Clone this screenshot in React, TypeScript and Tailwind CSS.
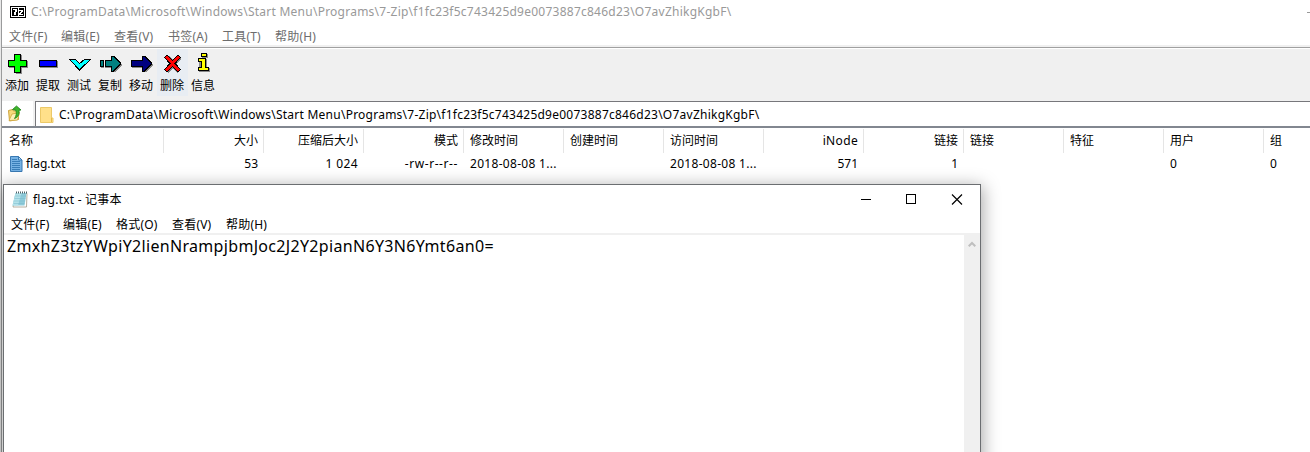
import type { ReactNode } from "react";

const PATH =
  "C:\\ProgramData\\Microsoft\\Windows\\Start Menu\\Programs\\7-Zip\\f1fc23f5c743425d9e0073887c846d23\\O7avZhikgKgbF\\";

function ToolIcon({ children }: { children: ReactNode }) {
  return (
    <svg width="31" height="24" viewBox="0 0 31 24" shapeRendering="crispEdges" className="block shrink-0">
      {children}
    </svg>
  );
}

const tools = [
  {
    label: "添加",
    icon: (
      <>
        <path d="M13 4h7v6h6v7h-6v6h-6v-1h-1z M7 11h19v6H7z" fill="#8a8a8a" />
        <path d="M12 3h7v6h6v7h-6v6h-7v-6H6V9h6z" fill="#000" />
        <path d="M13 4h5v6h6v5h-6v6h-5v-6H7v-5h6z" fill="#00ff00" />
      </>
    ),
  },
  {
    label: "提取",
    icon: (
      <>
        <path d="M7 10h18v7H7z" fill="#8a8a8a" />
        <path d="M6 9h18v7H6z" fill="#000" />
        <path d="M7 10h16v5H7z" fill="#0000ff" />
      </>
    ),
  },
  {
    label: "测试",
    icon: <path d="M5.500 8.500h6l4 4 5-4h6l-11 10.500z" fill="#00ffff" stroke="#000" />,
  },
  {
    label: "复制",
    icon: (
      <>
        <path d="M19 21l7-8 1 1-7 8z M6 16h3v1H6z M10 16h6v1h-6z" fill="#8a8a8a" />
        <path d="M5 9h4v7H5z M10 9h6V5h3l7 7v1l-7 8h-3v-5h-6z" fill="#000" />
        <path d="M6 10h2v5H6z M11 10h6V6h1l7 6.500-7 7.500h-1v-5h-6z" fill="#008080" />
      </>
    ),
  },
  {
    label: "移动",
    icon: (
      <>
        <path d="M19 21l7-8 1 1-7 8z M6 16h10v1H6z" fill="#8a8a8a" />
        <path d="M5 9h11V5h3l7 7v1l-7 8h-3v-5H5z" fill="#000" />
        <path d="M6 10h11V6h1l7 6.500-7 7.500h-1v-5H6z" fill="#000080" />
      </>
    ),
  },
  {
    label: "删除",
    icon: (
      <>
        <path d="M8 8l4-3 5 5 5-4 2 2-5 5 5 6-4 3-4-5-5 5-2-2 5-6z" fill="#8a8a8a" />
        <path
          d="M7.500 6.500l2.500-2.500 5.500 5.500 5.500-5.500 2.500 2.500-5.500 6 5.500 6-2.500 2.500-5.500-5.500-5.500 5.500-2.500-2.500 5.500-6z"
          fill="#ff0000"
          stroke="#000"
        />
      </>
    ),
  },
  {
    label: "信息",
    icon: (
      <>
        <path d="M14 3h6v4h-6z M11 8h8v9h3v4H11z" fill="#8a8a8a" />
        <path d="M13 2h6v4h-6z M11 7h7v9h3v4H10v-4h3v-5h-3V7z" fill="#000" />
        <path d="M14 3h4v2h-4z M11 8h6v9h3v2h-9v-2h3v-7h-3z" fill="#ffff00" />
      </>
    ),
  },
];

const mainMenu = [
  { label: "文件(F)", cls: "w-[52px]" },
  { label: "编辑(E)", cls: "w-[53px]" },
  { label: "查看(V)", cls: "w-[54px]" },
  { label: "书签(A)", cls: "w-[54px]" },
  { label: "工具(T)", cls: "w-[53px]" },
  { label: "帮助(H)", cls: "w-[53px]" },
];

const notepadMenu = [
  { label: "文件(F)", cls: "w-[52px]" },
  { label: "编辑(E)", cls: "w-[53px]" },
  { label: "格式(O)", cls: "w-[56px]" },
  { label: "查看(V)", cls: "w-[54px]" },
  { label: "帮助(H)", cls: "w-[54px]" },
];

const columns = [
  { title: "名称", value: "flag.txt", cls: "w-[162px] pl-[7px]", file: true },
  { title: "大小", value: "53", cls: "w-[100px] text-right pr-[6px]" },
  { title: "压缩后大小", value: "1 024", cls: "w-[100px] text-right pr-[6px]", track: "tracking-[0.4px]" },
  { title: "模式", value: "-rw-r--r--", cls: "w-[100px] text-right pr-[6px]", track: "tracking-[0.58px]" },
  { title: "修改时间", value: "2018-08-08 1...", cls: "w-[100px] pl-[6px]", track: "tracking-[0.3px]" },
  { title: "创建时间", value: "", cls: "w-[100px] pl-[6px]" },
  { title: "访问时间", value: "2018-08-08 1...", cls: "w-[100px] pl-[6px]", track: "tracking-[0.3px]" },
  { title: "iNode", value: "571", cls: "w-[100px] text-right pr-[6px]", titleTrack: "tracking-[0.35px]" },
  { title: "链接", value: "1", cls: "w-[100px] text-right pr-[6px]" },
  { title: "链接", value: "", cls: "w-[100px] pl-[6px]" },
  { title: "特征", value: "", cls: "w-[100px] pl-[6px]" },
  { title: "用户", value: "0", cls: "w-[100px] pl-[6px]" },
  { title: "组", value: "0", cls: "w-[100px] pl-[6px]" },
];

function SevenZipIcon() {
  return (
    <svg width="16" height="12" viewBox="0 0 16 12" shapeRendering="crispEdges" className="block">
      <path d="M0 0h16v12H0z" fill="#000" />
      <path d="M1 1h14v10H1z" fill="#fff" />
      <path d="M2 2h6v8H2z M9 2h5v8H9z" fill="#000" />
      <path d="M3 3h4v3H6v3H4V6h1V4H3z M9 4h4v2h-1v1h-1v1h2v1H9V7h1V6h1V5H9z" fill="#fff" />
    </svg>
  );
}

function UpFolderIcon() {
  return (
    <svg width="15" height="17" viewBox="0 0 15 17" className="block">
      <path d="M.5 5.500l4-1 1 1.500 5-.5v9l-9 1.500z" fill="#f6da7c" stroke="#c99b2e" strokeWidth=".9" />
      <path d="M1 15.500l3-6.500 7.500-1.500-2 7.500z" fill="#fdf0b8" stroke="#cfa63c" strokeWidth=".8" />
      <path d="M4.500 4.500L8.500 1l4.500 4-2 .3c.5 4.200-1 7.200-4.500 8.200 1.800-2.500 2.200-5 1.400-8.200z" fill="#3fb52c" stroke="#1c7d17" strokeWidth=".8" />
    </svg>
  );
}

function FolderIcon() {
  return (
    <svg width="14" height="16" viewBox="0 0 14 16" className="block">
      <path d="M.5.500h11v10.500h1.500v4.500H.5z" fill="#ffe08a" stroke="#ecc968" />
      <path d="M11.500 11v4" stroke="#e3b94d" />
    </svg>
  );
}

function DocIcon() {
  return (
    <svg width="13" height="16" viewBox="0 0 13 16" className="block">
      <path d="M.5.500h8l3.500 3.500v11.500H.5z" fill="#76b2e4" stroke="#3979b3" />
      <path d="M8.500.500v3.500H12z" fill="#b9dcf5" stroke="#3979b3" />
      <path d="M2 3.500h5M2 5.500h8M2 7.500h8M2 9.500h8M2 11.500h8M2 13.500h8" stroke="#397eb9" />
    </svg>
  );
}

function NotepadIcon() {
  return (
    <svg width="16" height="17" viewBox="0 0 16 17" className="block">
      <path d="M4 2.500h11L14.500 16H1z" fill="#fff" stroke="#a29b88" strokeWidth=".8" />
      <path d="M3.500 2h11L12.500 14.500H.5z" fill="#8ecbda" />
      <path d="M3.500 2h6L6 14.500H.5z" fill="#b4e2ea" />
      <path d="M3 5h11M2.500 7.500h11M2 10h11M1.500 12.500h11" stroke="#79b9ca" strokeWidth=".5" />
      <path d="M4 1.500h11" stroke="#4e646b" strokeWidth="2" strokeDasharray="1 1" />
    </svg>
  );
}

function Notepad() {
  return (
    <section className="absolute left-[3px] top-[184px] flex h-[300px] w-[978px] flex-col border border-[#6b6e71] bg-white shadow-[0_4px_16px_2px_rgba(0,0,0,0.34)]">
      <header className="flex h-[29px] shrink-0 items-center pl-[8px]">
        <NotepadIcon />
        <span className="ml-[5px] text-[12px] leading-[16px] tracking-[0.22px]">flag.txt - 记事本</span>
        <svg width="103" height="11" viewBox="0 0 103 11" className="mr-[16px] ml-auto block" fill="none" stroke="#000">
          <path d="M0 5.500h10M45.500.500h9v9h-9z" shapeRendering="crispEdges" />
          <path d="M91 .500l10 10M101 .500l-10 10" strokeWidth="1.150" />
        </svg>
      </header>
      <nav className="flex h-[19px] shrink-0 items-center pt-[3px] pl-[7px] text-[12px] leading-[16px] tracking-[0.2px]">
        {notepadMenu.map((m) => (
          <span key={m.label} className={m.cls}>{m.label}</span>
        ))}
      </nav>
      <div className="flex flex-1 border-t-2 border-[#f0f0f0]">
        <p className="flex-1 pt-[1px] pl-[3px] text-[16px] leading-[21px] tracking-[0.32px]">
          ZmxhZ3tzYWpiY2lienNrampjbmJoc2J2Y2pianN6Y3N6Ymt6an0=
        </p>
        <div className="w-[16px] bg-[#f0f0f0] pt-[6px] pl-[4px]">
          <svg width="8" height="7" viewBox="0 0 8 7" className="block" fill="none" stroke="#bfbfbf" strokeWidth="2">
            <path d="M.7 5.300L4 2l3.300 3.300" />
          </svg>
        </div>
      </div>
    </section>
  );
}

export default function App() {
  return (
    <main className="relative flex h-[452px] w-[1310px] overflow-hidden bg-white font-['Noto_Sans','Noto_Sans_CJK_SC',sans-serif] text-black whitespace-pre">
      <div className="w-[2px] shrink-0 border-r border-[#9a9b9c] bg-[#e8e8e8]" />
      <div className="flex min-w-0 flex-1 flex-col">
        <header className="flex h-[24px] shrink-0 items-center pl-[8px]">
          <SevenZipIcon />
          <span className="ml-[5px] text-[12px] leading-[16px] tracking-[0.243px] text-[#999]">{PATH}</span>
          <span className="mr-[-2px] ml-auto h-px w-[5px] bg-[#999]" />
        </header>
        <nav className="flex h-[21px] shrink-0 items-center pt-[5px] pl-[7px] text-[12px] leading-[16px] tracking-[0.2px] text-[#6d6d6d]">
          {mainMenu.map((m) => (
            <span key={m.label} className={m.cls}>{m.label}</span>
          ))}
        </nav>
        <div className="h-[4px] shrink-0 border-t-2 border-[#f0f0f0]">
          <div className="h-px bg-[#a0a0a0]" />
        </div>
        <div className="flex h-[52px] shrink-0 bg-[#f0f0f0]">
          {tools.map((t) => (
            <div
              key={t.label}
              className={
                "flex h-[47px] w-[31px] flex-col items-center pt-[2px] " + (t.label === "删除" ? "bg-[#e8edf3]" : "")
              }
            >
              <ToolIcon>{t.icon}</ToolIcon>
              <span className="mt-[3px] mr-[1px] text-[12px] leading-[16px]">{t.label}</span>
            </div>
          ))}
        </div>
        <div className="flex h-[25px] shrink-0 bg-[#f0f0f0]">
          <div className="flex w-[31px] items-center bg-white pl-[6px]">
            <UpFolderIcon />
          </div>
          <div className="ml-[2px] flex flex-1 items-center border-t border-l border-[#77777b] bg-white pt-[1px] pl-[4px]">
            <FolderIcon />
            <span className="ml-[5px] text-[12px] leading-[16px] tracking-[0.243px]">{PATH}</span>
          </div>
        </div>
        <div className="flex flex-1 flex-col border-t-2 border-[#828790]">
          <div className="flex text-[12px] leading-[16px]">
            {columns.map((c, i) => (
              <div key={i} className={"shrink-0 " + c.cls}>
                <div className={"relative h-[25px] pt-[5px] " + (c.titleTrack ?? "")}>
                  {c.title}
                  {i < 12 && (
                    <i className={"absolute top-px h-[24px] w-px bg-[#e5e5e5] " + (c.cls.includes("pr-") ? "right-[-6px]" : "right-0")} />
                  )}
                </div>
                <div className="flex h-[22px] items-center">
                  {c.file && <span className="mr-[3px] ml-[1px]"><DocIcon /></span>}
                  <span className={(c.cls.includes("text-right") ? "flex-1 " : "") + (c.track ?? "")}>{c.value}</span>
                </div>
              </div>
            ))}
          </div>
        </div>
      </div>
      <Notepad />
    </main>
  );
}
